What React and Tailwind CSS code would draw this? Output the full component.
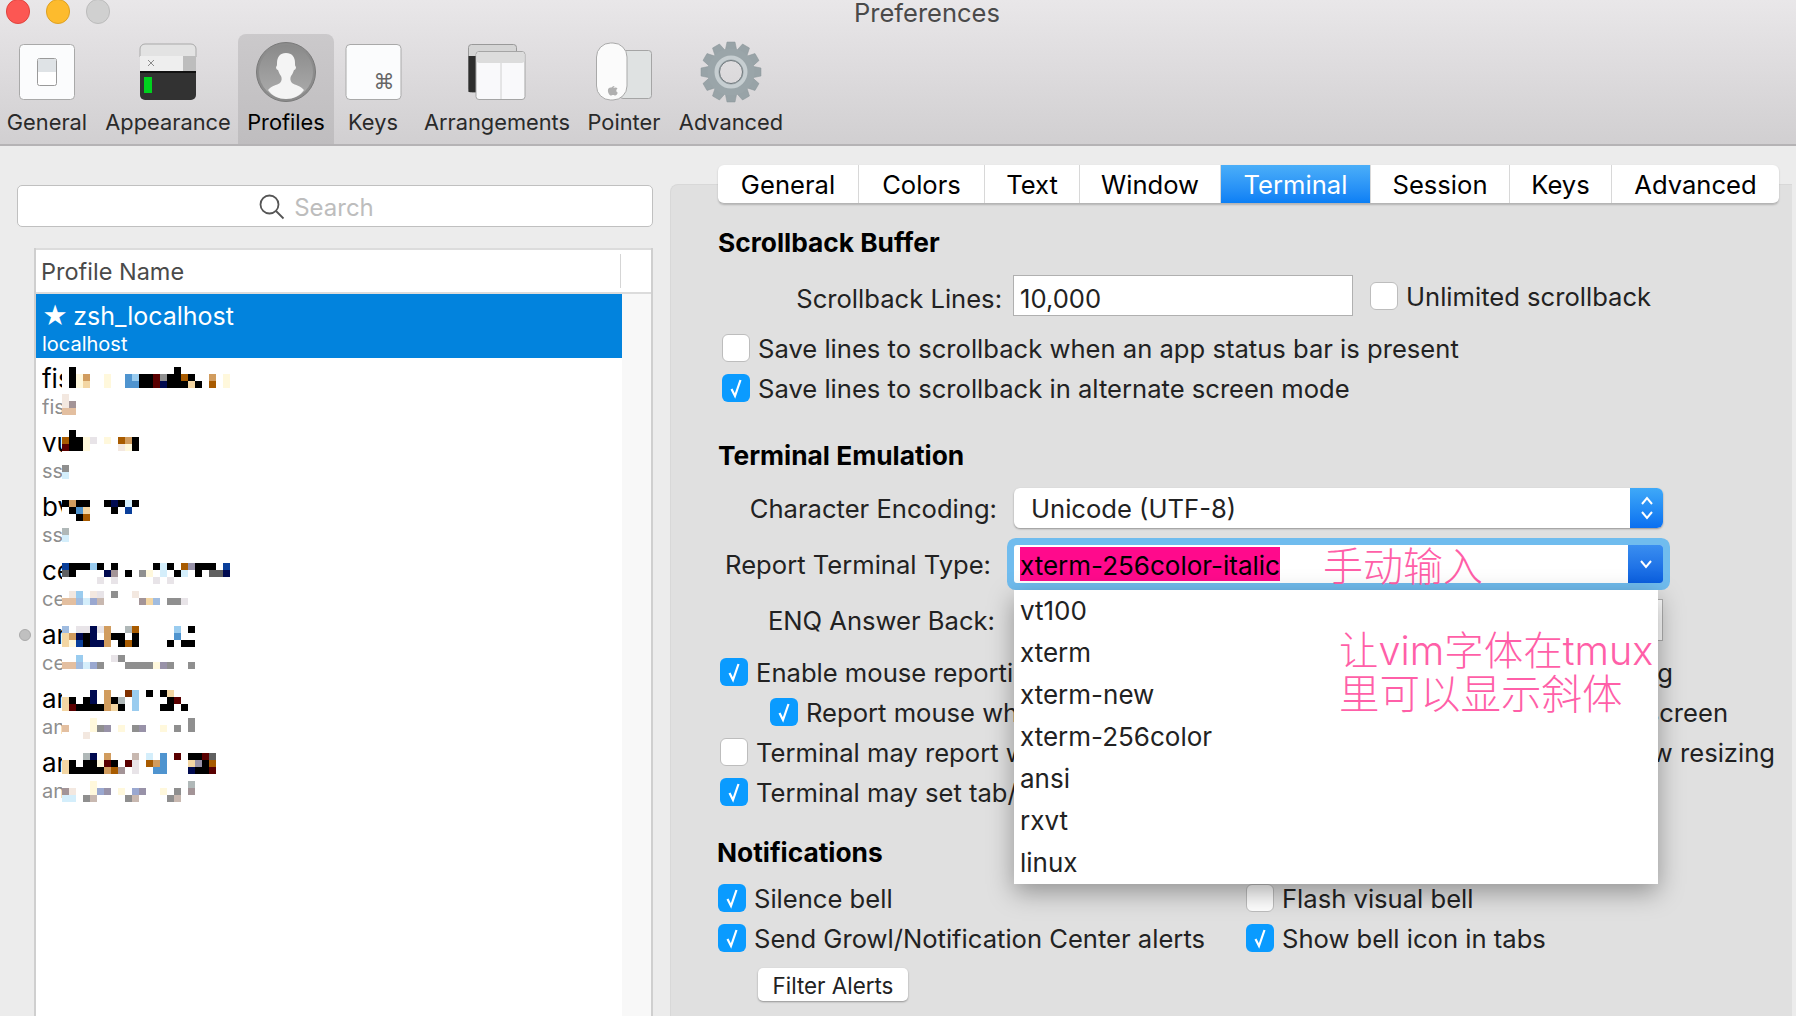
const font = { fontFamily: '"Inter", "Noto Sans CJK SC", sans-serif' };

const palette = {
  k: "#000000", n: "#000a50", B: "#0a3f9a", b: "#4f94cf", l: "#9accef", c: "#d4eefb",
  o: "#a85b00", t: "#d19c5e", s: "#f3d6a3", y: "#fff8dc", r: "#5a0000", g: "#8f8f8f",
  G: "#606060", e: "#e8e4e8", w: "#9892a8", m: "#e3bfa0", v: "#a0bce0", p: "#9aa8d0",
  h: "#a39497", d: "#803000", q: "#b0b8b8", i: "#f3e8e0", u: "#c8b8b0",
};

// blurred-out profile names, one char per 7px block
const profiles = [
  {
    name: "fish", sub: "fish", top: 9, subTop: 36,
    title: [".k..............k.......", ".kyt..y..blkkrgkkok..t.y", ".kys..y..bbkkrnkkksk.o.y"],
    subBlocks: ["i.", "ih", "mm"],
  },
  {
    name: "vu", sub: "ssh", top: 8, subTop: 43,
    title: [".k.........", "okkye.y.otk", "rkky....iyk"],
    subBlocks: ["g", "c"],
  },
  {
    name: "bv", sub: "ssh", top: 14, subTop: 42,
    title: ["ktkk..knkck", ".kbs...k.B.", "..ko......."],
    subBlocks: ["q", "c"],
  },
  {
    name: "ce", sub: "ce", top: 13, subTop: 41,
    title: ["Bkkklk.k.....kck.owkkk.B", "Gk....nh.k.gy.c.kc.k.GGn", ".....e.e.....e.e........"],
    subBlocks: [".il.ie.g..i.............", "mmvcpu.....hsv.gge......"],
  },
  {
    name: "ar", sub: "ce", top: 12, subTop: 41,
    title: ["v.eeneta.qo.....l.k", "stnkn.tkk.k.....b..", "syBknnt.kok....k.kk"],
    subBlocks: ["..l....eg............", "mmvcpg...ggggywg..g.."],
  },
  {
    name: "ar", sub: "an", top: 12, subTop: 40,
    title: ["....n.t..dl.k.ks.", "sk.kn.tkq.l....kr", "srkkkktsk.l...kk.k"],
    subBlocks: ["....y.............g", "m...ygw.y.gw..y.g.g", "...i............."],
  },
  {
    name: "ar", sub: "an", top: 11, subTop: 39,
    title: ["...qn.t...u.c.b.r.kkrG", "sk.kkyrk.re.otb...swko", "skkkkktoh.e..bb...nkkr"],
    subBlocks: ["....y.............q", "hi..ypw.y.pw..y.g.h", "cc.gu....gu....gu.."],
  },
];

const Mosaic = ({ rows, top }) => (
  <svg
    className="absolute left-[26px]"
    style={{ top }}
    width="175"
    height={rows.length * 7}
    shapeRendering="crispEdges"
  >
    {rows.map((row, y) =>
      row.split("").map((c, x) =>
        palette[c] ? (
          <rect key={`${x}-${y}`} x={x * 7} y={y * 7} width="7" height="7" fill={palette[c]} />
        ) : null
      )
    )}
  </svg>
);

const GeneralIcon = () => (
  <svg width="64" height="64" viewBox="0 0 64 64">
    <rect x="4.5" y="4.5" width="55" height="55" rx="4" fill="#fbfcfd" stroke="#a9a9a9" />
    <rect x="22.5" y="18.5" width="19" height="27" rx="2" fill="#fff" stroke="#9a9a9a" />
    <rect x="23" y="19" width="18" height="13" fill="#dfe3e6" />
  </svg>
);

const AppearanceIcon = () => (
  <svg width="64" height="64" viewBox="0 0 64 64">
    <path d="M4 32h56v23a5 5 0 0 1-5 5H9a5 5 0 0 1-5-5z" fill="#323232" />
    <path d="M4 9a5 5 0 0 1 5-5h46a5 5 0 0 1 5 5v8H4z" fill="#e3e3e3" stroke="#a9a9a9" />
    <rect x="4" y="16" width="43" height="15" fill="#eeeeee" />
    <rect x="47" y="16" width="13" height="15" fill="#bdbdbd" />
    <rect x="4" y="31" width="56" height="2" fill="#111" />
    <path d="M12 20l6 6M18 20l-6 6" stroke="#8a8a8a" strokeWidth="1" />
    <rect x="8" y="37" width="8" height="16" fill="#00d21e" />
  </svg>
);

const ProfilesIcon = () => (
  <svg width="64" height="64" viewBox="0 0 64 64">
    <defs>
      <linearGradient id="oval" x1="0" y1="0" x2="0" y2="1">
        <stop offset="0" stopColor="#8a8a8a" />
        <stop offset="1" stopColor="#adadad" />
      </linearGradient>
    </defs>
    <circle cx="32" cy="32" r="29.5" fill="#8c8c8c" stroke="#7a7a7a" strokeWidth="1" />
    <circle cx="32" cy="32" r="27" fill="url(#oval)" />
    <path
      d="M32 13c-6 0-9 4-9 10 0 2 0 3-1 4 0 2 1 3 2 3 1 3 2 5 3 6 1 2 1 5-1 7-3 2-9 3-12 7 4 6 11 9 18 9s14-3 18-9c-3-4-9-5-12-7-2-2-2-5-1-7 1-1 2-3 3-6 1 0 2-1 2-3-1-1-1-2-1-4 0-6-3-10-9-10z"
      fill="#f4f4f4"
    />
  </svg>
);

const KeysIcon = () => (
  <svg width="64" height="64" viewBox="0 0 64 64">
    <rect x="5" y="4.5" width="55" height="55" rx="4" fill="#fbfcfd" stroke="#a9a9a9" />
    <text x="43" y="49" fontSize="21" textAnchor="middle" fill="#666" fontFamily="DejaVu Sans">
      ⌘
    </text>
  </svg>
);

const ArrangementsIcon = () => (
  <svg width="64" height="64" viewBox="0 0 64 64">
    <rect x="3.5" y="4.5" width="48" height="48" rx="3" fill="#d5d5d5" stroke="#999" />
    <rect x="3.5" y="16" width="8" height="36" fill="#2e2e2e" />
    <rect x="11" y="11.5" width="49" height="48" rx="3" fill="#f9f9fb" stroke="#a5a5a5" />
    <rect x="11.5" y="12" width="48" height="11" rx="3" fill="#dcdcdc" />
    <path d="M36 23v36" stroke="#d0d0d0" />
  </svg>
);

const PointerIcon = () => (
  <svg width="64" height="64" viewBox="0 0 64 64">
    <rect x="28" y="10.5" width="31.5" height="48" rx="3" fill="#dfe2e2" stroke="#a5a5a5" />
    <rect x="4.5" y="3" width="30.5" height="57" rx="14" fill="#fbfbfb" stroke="#a9a9a9" />
    <path
      d="M19.5 47.5c1-1.5 2.500-1.500 3-1.500-.2 1-.7 1.600-1.500 1.900.8 0 1.500-.4 2.500-.4.800 0 1.500.4 2 1-1.800 1-1.500 3.500.3 4.200-.6 1.500-1.500 2.800-2.500 2.800-.8 0-1.200-.5-2.200-.5s-1.400.5-2.200.5c-1.500 0-3-2.700-3-5 0-2 1.200-3 2.800-3 .3 0 .6 0 1 .1z"
      fill="#b0b0b0"
    />
  </svg>
);

const AdvancedIcon = () => (
  <svg width="64" height="64" viewBox="0 0 64 64">
    {[0, 30, 60, 90, 120, 150, 180, 210, 240, 270, 300, 330].map((a) => (
      <path key={a} d="M28 2h8l2.500 12h-13z" fill="#98a3a7" stroke="#8a9498" strokeWidth="0.5" transform={`rotate(${a} 32 32)`} />
    ))}
    <circle cx="32" cy="32" r="17.500" fill="none" stroke="#9aa5a9" strokeWidth="12" />
    <circle cx="32" cy="32" r="14.500" fill="none" stroke="#c6ced1" strokeWidth="4" />
    <circle cx="32" cy="32" r="11.500" fill="none" stroke="#6f787c" strokeWidth="1" />
  </svg>
);

const toolbarItems = [
  { label: "General", width: "w-[94px]", Icon: GeneralIcon },
  { label: "Appearance", width: "w-[144px] pl-[4px]", Icon: AppearanceIcon },
  { label: "Profiles", width: "w-[96px]", Icon: ProfilesIcon, active: true },
  { label: "Keys", width: "w-[78px]", Icon: KeysIcon },
  { label: "Arrangements", width: "w-[170px]", Icon: ArrangementsIcon },
  { label: "Pointer", width: "w-[84px]", Icon: PointerIcon },
  { label: "Advanced", width: "w-[130px]", Icon: AdvancedIcon },
];

const tabs = [
  { label: "General", width: "w-[141px]" },
  { label: "Colors", width: "w-[126px]" },
  { label: "Text", width: "w-[95px]" },
  { label: "Window", width: "w-[141px]" },
  { label: "Terminal", width: "w-[150px]", active: true },
  { label: "Session", width: "w-[139px]" },
  { label: "Keys", width: "w-[102px]" },
  { label: "Advanced", width: "w-[167px]" },
];

const Checkbox = ({ checked }) =>
  checked ? (
    <span className="flex h-7 w-7 shrink-0 items-center justify-center rounded-md bg-[#0a9bff]">
      <svg width="16" height="22" viewBox="0 0 16 22" fill="none">
        <path d="M3.500 12l3.500 7L12.500 3" stroke="#fff" strokeWidth="2.200" />
      </svg>
    </span>
  ) : (
    <span className="h-7 w-7 shrink-0 rounded-md border border-[#bdbdbd] bg-white" />
  );

const Check = ({ checked, label, className = "" }) => (
  <div className={`flex h-7 items-center whitespace-nowrap ${className}`}>
    <Checkbox checked={checked} />
    <span className="ml-2 pt-[2px] text-[#222]">{label}</span>
  </div>
);

const Heading = ({ children, className = "" }) => (
  <h3 className={`flex h-[30px] items-center text-[26.3px] font-bold text-black ${className}`}>{children}</h3>
);

const menuOptions = ["vt100", "xterm", "xterm-new", "xterm-256color", "ansi", "rxvt", "linux"];

const App = () => {
  return (
    <div
      className="flex h-[1016px] w-[1796px] flex-col overflow-hidden bg-[#ececec] text-[25.6px] leading-none text-[#222]"
      style={font}
    >
      {/* Toolbar */}
      <div className="relative h-[146px] shrink-0 border-b-2 border-[#b5b3b5] bg-gradient-to-b from-[#e9e7e9] to-[#d1cfd1]">
        <div className="flex h-[34px] items-start">
          <div className="ml-[6px] flex gap-[16px]">
            <span className="-mt-px h-[25px] w-[24px] rounded-full border border-[#e0443e] bg-[#fc5753]" />
            <span className="-mt-px h-[25px] w-[24px] rounded-full border border-[#dea123] bg-[#fdbb2d]" />
            <span className="-mt-px h-[25px] w-[24px] rounded-full border border-[#bcbcbc] bg-[#d0d0d0]" />
          </div>
          <span className="ml-[744px] text-[25.5px] leading-[26px] text-[#4a4a4a]">Preferences</span>
        </div>
        <div className="flex h-[110px]">
          {toolbarItems.map(({ label, width, Icon, active }) => (
            <div
              key={label}
              className={`flex flex-col items-center ${width} ${active ? "rounded-t-lg bg-gradient-to-b from-[#cbc9cb] to-[#bfbdbf]" : ""}`}
            >
              <div className="mt-[6px] h-[64px]">
                <Icon />
              </div>
              <span className={`mt-[5px] text-[21.8px] leading-[26px] whitespace-nowrap ${active ? "text-black" : "text-[#2a2a2a]"}`}>
                {label}
              </span>
            </div>
          ))}
        </div>
      </div>

      <div className="flex min-h-0 flex-1">
        {/* Profile list */}
        <div className="relative w-[670px] shrink-0 pt-[39px]">
          <div className="ml-[17px] flex h-[42px] w-[636px] items-center justify-center rounded-[5px] border border-[#c0c0c0] bg-white">
            <svg width="27" height="27" viewBox="0 0 27 27" fill="none" stroke="#555" strokeWidth="1.800">
              <circle cx="11.500" cy="11.500" r="9" />
              <path d="M18 18l7.500 7.500" />
            </svg>
            <span className="mr-[38px] ml-[9px] pt-[3px] text-[24px] text-[#bdbdbd]">Search</span>
          </div>
          <div className="mt-[21px] ml-[34px] flex h-[900px] w-[619px] flex-col border-x-2 border-[#cfcfcf] bg-[#f8f8f8]">
            <div className="flex h-[46px] shrink-0 items-center border-y-2 border-[#dcdcdc] bg-white">
              <span className="ml-[5px] pt-[2px] text-[23.5px] text-[#4a4a4a]">Profile Name</span>
              <span className="mr-[30px] ml-auto h-[34px] w-px bg-[#d5d5d5]" />
            </div>
            <div className="w-[586px] flex-1 bg-white">
              <div className="flex h-[64px] flex-col bg-[#0283dd] pl-[6px] text-white">
                <span className="mt-[8px] flex text-[25px] leading-[28px] whitespace-nowrap">
                  <span>★</span>
                  <span className="ml-[5px]">zsh_localhost</span>
                </span>
                <span className="mt-[2px] text-[20px] leading-[24px]">localhost</span>
              </div>
              {profiles.map((p, i) => (
                <div key={i} className="relative flex h-[64px] flex-col pl-[6px]">
                  <span className="mt-[7px] h-[28px] w-[20px] overflow-hidden text-[26px] leading-[28px] text-black">
                    {p.name}
                  </span>
                  <span className="mt-[2px] h-[24px] w-[20px] overflow-hidden text-[20px] leading-[24px] text-[#8e8e8e]">
                    {p.sub}
                  </span>
                  <Mosaic rows={p.title} top={p.top} />
                  <Mosaic rows={p.subBlocks} top={p.subTop} />
                </div>
              ))}
            </div>
          </div>
          <span className="absolute top-[483px] left-[19px] h-[12px] w-[12px] rounded-full border border-[#aaa] bg-[#c0c0c0]" />
        </div>

        {/* Terminal settings */}
        <div className="mt-[38px] w-[1122px] shrink-0 rounded-tl-lg border-t border-l border-[#d8d8d8] bg-[#e0e0e0] pl-[47px]">
          <div className="-mt-[20px] flex h-[39px] w-[1061px] overflow-hidden rounded-md border-b border-[#b5b5b5] bg-white shadow-[0_1px_2px_rgba(0,0,0,0.2)]">
            {tabs.map(({ label, width, active }) => (
              <div
                key={label}
                className={`flex items-center justify-center border-r border-[#d8d8d8] pt-[2px] last:border-r-0 ${width} ${
                  active ? "bg-gradient-to-b from-[#4aaef8] to-[#0a7ff5] text-white" : "text-black"
                }`}
              >
                {label}
              </div>
            ))}
          </div>

          <Heading className="mt-[24px]">Scrollback Buffer</Heading>
          <div className="mt-[17px] flex h-[41px] items-center">
            <span className="w-[284px] pt-[6px] text-right whitespace-nowrap">Scrollback Lines:</span>
            <div className="ml-[11px] flex h-[41px] w-[340px] items-center border border-[#b0b0b0] bg-white pt-[6px] pl-[6px]">
              10,000
            </div>
            <Check label="Unlimited scrollback" className="ml-[17px]" />
          </div>
          <Check label="Save lines to scrollback when an app status bar is present" className="mt-[18px] ml-[4px]" />
          <Check checked label="Save lines to scrollback in alternate screen mode" className="mt-[12px] ml-[4px]" />

          <Heading className="mt-[39px]">Terminal Emulation</Heading>
          <div className="mt-[17px] flex h-[40px] items-center">
            <span className="w-[279px] pt-[2px] text-right whitespace-nowrap">Character Encoding:</span>
            <div className="ml-[17px] flex h-[40px] w-[649px] items-center justify-between overflow-hidden rounded-md bg-white pl-[17px] shadow-[0_1px_2px_rgba(0,0,0,0.35)]">
              <span className="pt-[2px]">Unicode (UTF-8)</span>
              <span className="flex h-full w-[33px] items-center justify-center bg-gradient-to-b from-[#3fa9f8] to-[#0a6ff0]">
                <svg width="16" height="28" viewBox="0 0 16 28" fill="none" stroke="#fff" strokeWidth="2">
                  <path d="M3 10l5-6 5 6M3 18l5 6 5-6" />
                </svg>
              </span>
            </div>
          </div>
          <div className="mt-[17px] flex h-[38px] items-center">
            <span className="w-[273px] pt-[2px] text-right whitespace-nowrap">Report Terminal Type:</span>
            <div className="relative ml-[23px] h-[38px] w-[649px]">
              <div className="flex h-full items-center justify-between rounded-[3px] bg-white pl-[6px] ring-[7px] ring-[#70bcee]">
                <div className="flex items-center">
                  <span className="flex h-[34px] items-center bg-[#ff0a8c] pt-[3px] text-[26px] text-black">xterm-256color-italic</span>
                  <span className="mt-[5px] ml-[43px] text-[40px] leading-[38px] font-light text-[#ff5fa8]">手动输入</span>
                </div>
                <span className="flex h-full w-[35px] items-center justify-center rounded-r-[3px] bg-gradient-to-b from-[#3a8ef0] to-[#0a5fe0]">
                  <svg width="16" height="12" viewBox="0 0 16 12" fill="none" stroke="#fff" strokeWidth="2">
                    <path d="M3 3l5 6 5-6" />
                  </svg>
                </span>
              </div>
              {/* Open combo box menu */}
              <div className="absolute top-[45px] left-0 z-10 w-[644px] bg-white shadow-[0_8px_24px_rgba(0,0,0,0.35)]">
                {menuOptions.map((option) => (
                  <div key={option} className="flex h-[42px] items-center pl-[6px] text-[26px] text-[#222]">
                    {option}
                  </div>
                ))}
                <div className="absolute top-[40px] left-[325px] text-[40px] leading-[43px] font-light whitespace-nowrap text-[#ff5fa8]">
                  <div className="text-[39.5px]">让vim字体在tmux</div>
                  <div className="text-[40.5px]">里可以显示斜体</div>
                </div>
              </div>
            </div>
          </div>
          <div className="mt-[16px] flex h-[42px] items-center">
            <span className="w-[277px] pt-[2px] text-right whitespace-nowrap">ENQ Answer Back:</span>
            <div className="ml-[19px] h-[42px] w-[649px] border border-[#b0b0b0] bg-white" />
          </div>
          <div className="mt-[17px] flex w-[955px] justify-between">
            <Check checked label="Enable mouse reporting" className="ml-[2px]" />
            <span className="flex h-7 items-center pt-[2px] whitespace-nowrap">Disable session-initiated printing</span>
          </div>
          <div className="mt-[12px] flex w-[1010px] justify-between">
            <Check checked label="Report mouse wheel events" className="ml-[52px]" />
            <span className="flex h-7 items-center pt-[2px] whitespace-nowrap">Disable save/restore alternate screen</span>
          </div>
          <div className="mt-[12px] flex w-[1057px] justify-between">
            <Check label="Terminal may report window title" className="ml-[2px]" />
            <span className="flex h-7 items-center pt-[2px] whitespace-nowrap">Disable session-initiated window resizing</span>
          </div>
          <Check checked label="Terminal may set tab/window title" className="mt-[12px] ml-[2px]" />

          <Heading className="mt-[32px] -ml-px">Notifications</Heading>
          <div className="mt-[16px] flex">
            <Check checked label="Silence bell" className="w-[528px]" />
            <Check label="Flash visual bell" />
          </div>
          <div className="mt-[12px] flex">
            <Check checked label="Send Growl/Notification Center alerts" className="w-[528px]" />
            <Check checked label="Show bell icon in tabs" />
          </div>
          <button className="mt-[16px] ml-[40px] h-[33px] w-[150px] rounded-[5px] bg-white pt-[3px] text-[22.4px] text-[#222] shadow-[0_1px_2px_rgba(0,0,0,0.35)]">
            Filter Alerts
          </button>
        </div>
      </div>
    </div>
  );
};

export default App;
